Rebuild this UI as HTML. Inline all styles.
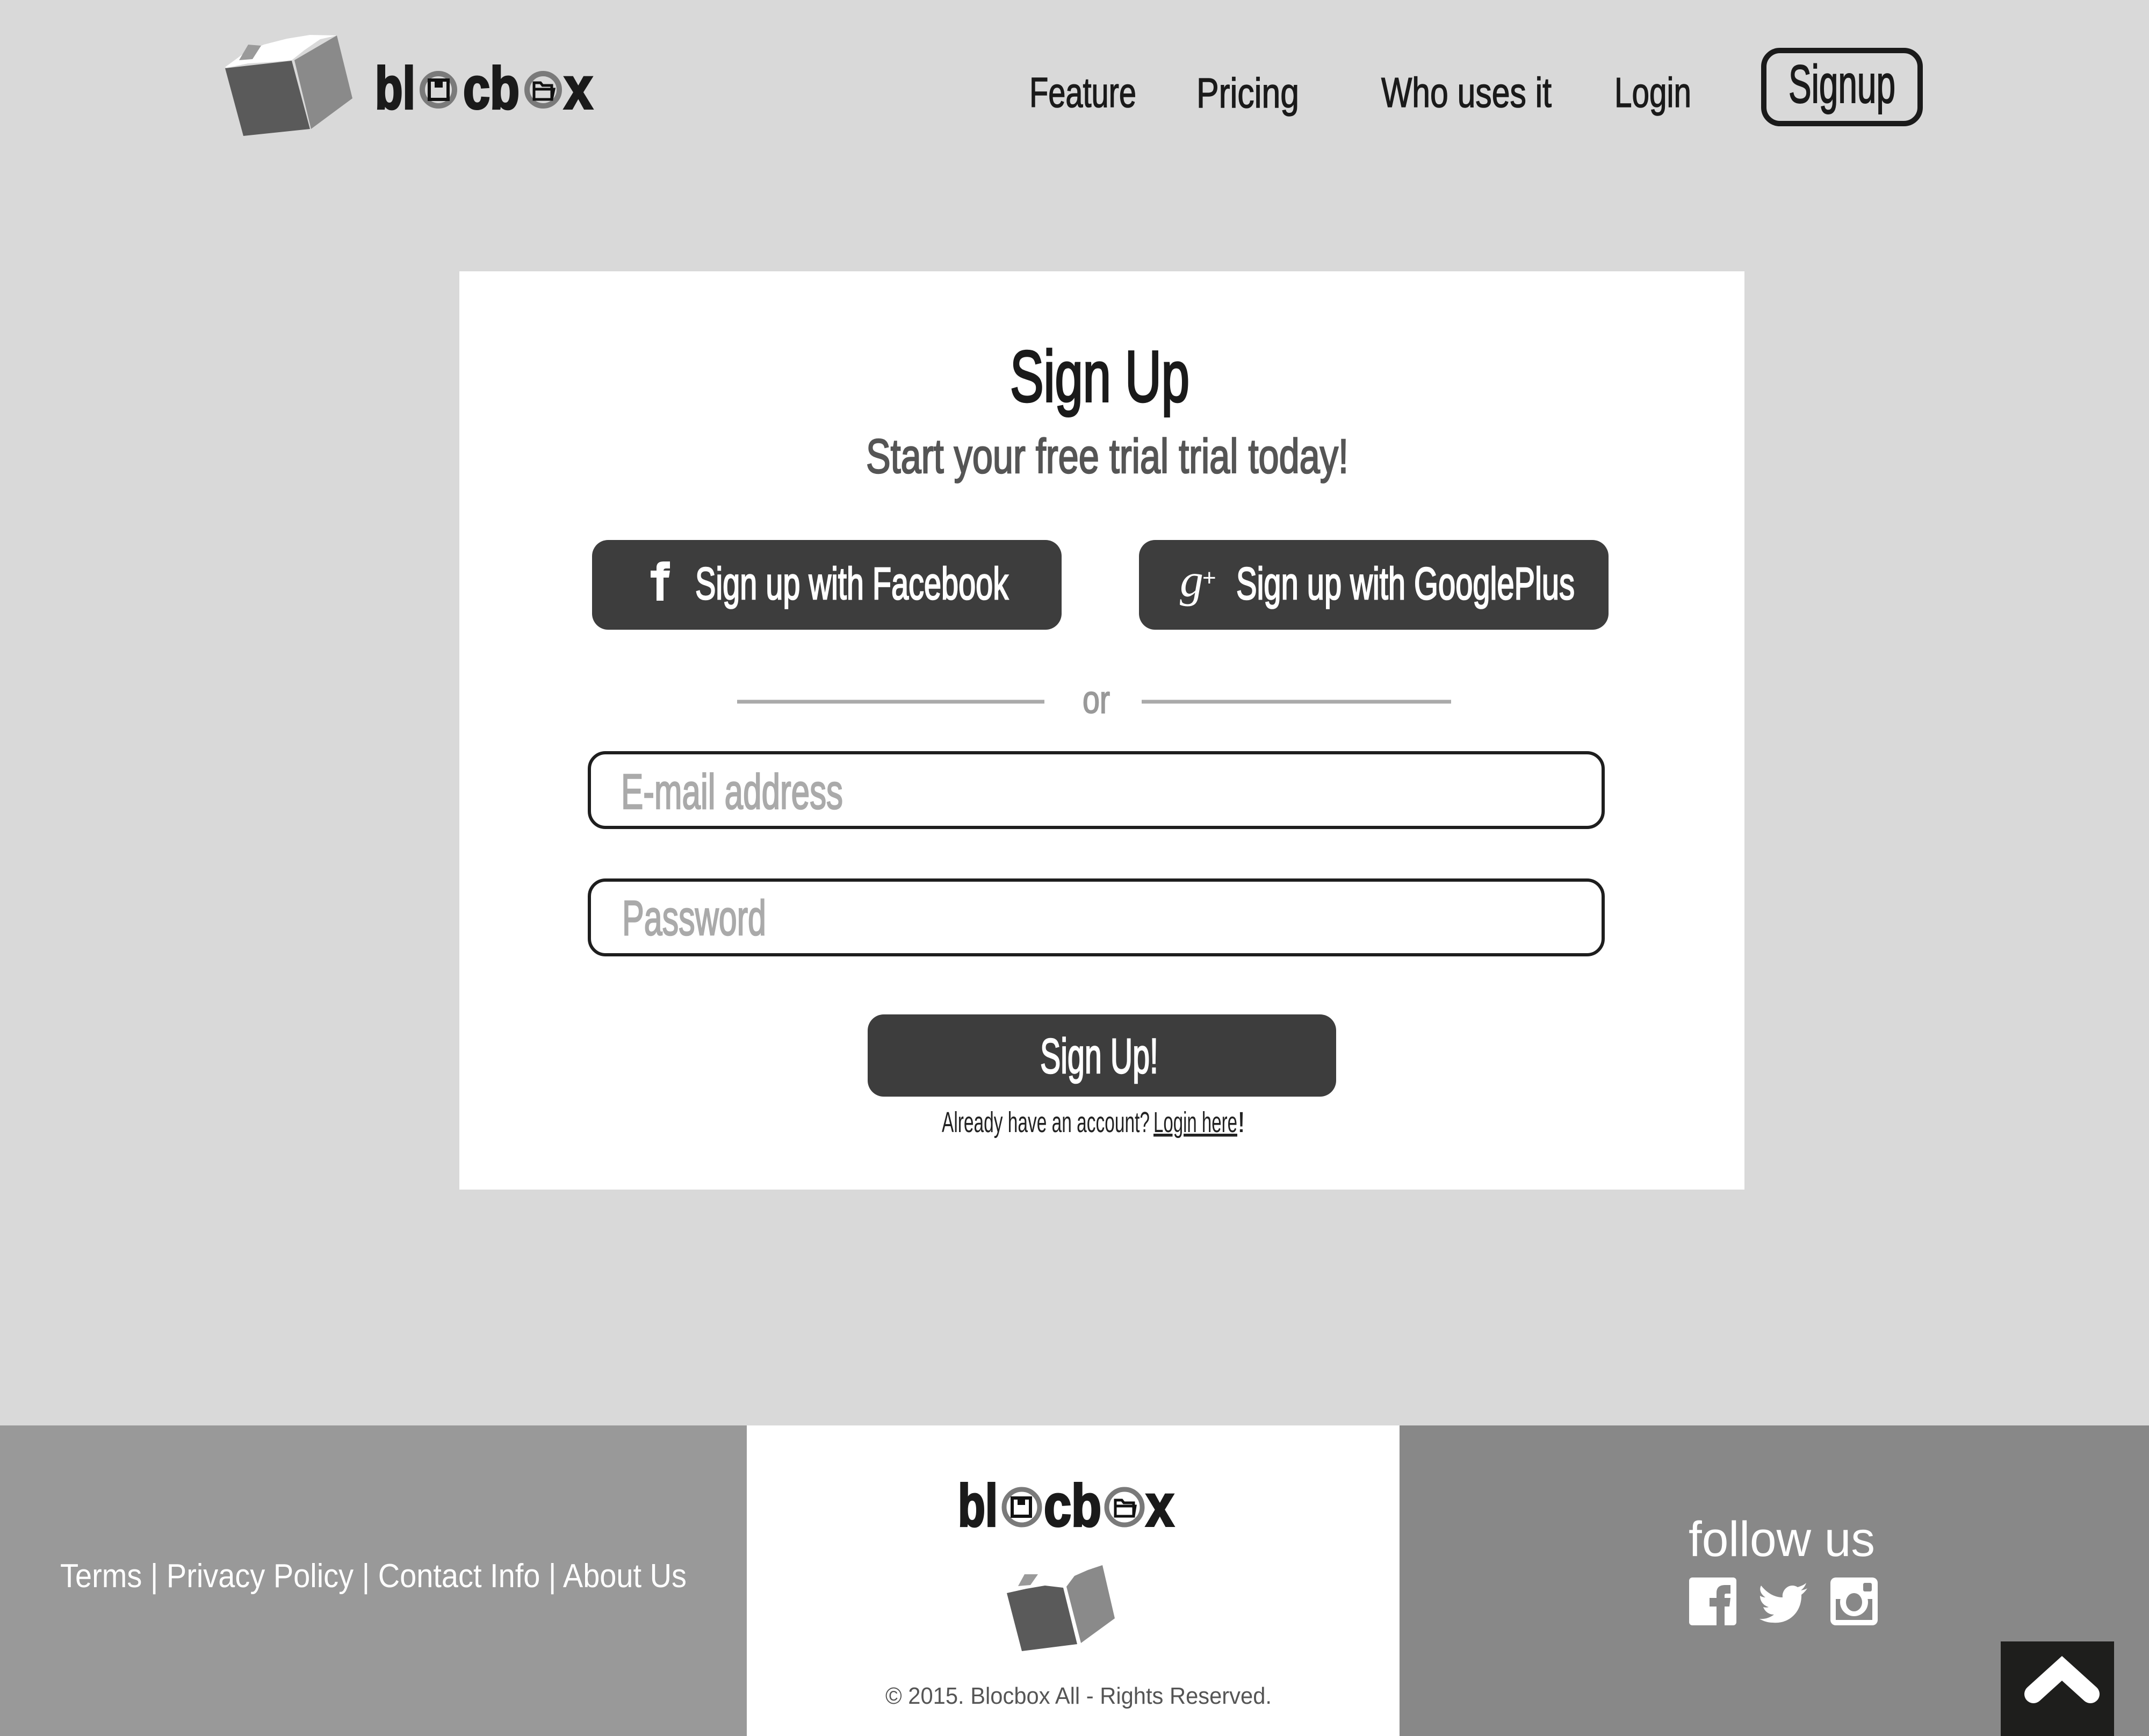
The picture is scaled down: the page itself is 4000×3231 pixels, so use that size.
<!DOCTYPE html>
<html><head><meta charset="utf-8"><style>
html,body{margin:0;padding:0;background:#d9d9d9}
svg{display:block}
.n{font-family:"Liberation Sans Narrow","Liberation Sans",sans-serif}
.s{font-family:"Liberation Sans",sans-serif}
</style></head><body>
<svg width="4000" height="3231" viewBox="0 0 4000 3231" xmlns="http://www.w3.org/2000/svg">
<rect width="4000" height="3231" fill="#d9d9d9"/>

<!-- header logo -->
<polygon points="422,126 462,118 510,115 543,112 567,93 596,73 627,66 577,65 534,72 491,83 453,100 419,125" fill="#fff"/>
<polygon points="445,112 462,83 486,85 470,110" fill="#9a9a9a"/>
<polygon points="419,127 543,113 577,240 453,253" fill="#5a5a5a"/>
<polygon points="548,112 627,66 656,183 579,240" fill="#8a8a8a"/>
<g class="s" font-weight="bold" font-size="110" fill="#1a1a1a" stroke="#1a1a1a" stroke-width="4">
<text x="698" y="202" textLength="75" lengthAdjust="spacingAndGlyphs">bl</text>
<text x="862" y="202" textLength="105" lengthAdjust="spacingAndGlyphs">cb</text>
<text x="1050" y="202" textLength="53" lengthAdjust="spacingAndGlyphs">x</text>
</g>
<circle cx="816" cy="167" r="30" fill="none" stroke="#7a7a7a" stroke-width="10"/>
<rect x="799" y="149" width="35" height="36" fill="none" stroke="#111" stroke-width="6"/>
<rect x="809" y="149" width="15" height="14" fill="#111"/>
<circle cx="1011" cy="167" r="30" fill="none" stroke="#7a7a7a" stroke-width="10"/>
<path d="M994 185 V154 H1006 L1010 159 H1027 V185 Z M994 166 H1031 L1027 185" fill="none" stroke="#111" stroke-width="5"/>

<!-- nav -->
<g class="n" font-size="78" fill="#1a1a1a" stroke="#1a1a1a" stroke-width="1.5">
<text x="1916" y="199" textLength="199" lengthAdjust="spacingAndGlyphs">Feature</text>
<text x="2227" y="200" textLength="191" lengthAdjust="spacingAndGlyphs">Pricing</text>
<text x="2571" y="199" textLength="317" lengthAdjust="spacingAndGlyphs">Who uses it</text>
<text x="3005" y="199" textLength="143" lengthAdjust="spacingAndGlyphs">Login</text>
</g>
<rect x="3283" y="94" width="291" height="136" rx="30" fill="none" stroke="#1a1a1a" stroke-width="10"/>
<text class="n" x="3329" y="191" font-size="100" fill="#1a1a1a" stroke="#1a1a1a" stroke-width="2" textLength="199" lengthAdjust="spacingAndGlyphs">Signup</text>

<!-- card -->
<rect x="855" y="505" width="2392" height="1709" fill="#fff"/>
<text class="n" x="1880" y="747" font-size="135" fill="#1a1a1a" stroke="#1a1a1a" stroke-width="4" textLength="334" lengthAdjust="spacingAndGlyphs">Sign Up</text>
<text class="n" x="1612" y="880" font-size="90" fill="#555" stroke="#555" stroke-width="2.5" textLength="898" lengthAdjust="spacingAndGlyphs">Start your free trial trial today!</text>

<rect x="1102" y="1005" width="874" height="167" rx="30" fill="#3d3d3d"/>
<path d="M1222 1118 V1075 H1211 V1062 H1222 V1057 C1222 1047 1228 1045 1236 1045 H1247 V1058 H1240 C1236 1058 1235 1060 1235 1063 V1062 H1247 L1245 1075 H1235 V1118 Z" fill="#fff"/>
<text class="n" x="1294" y="1115" font-size="84" fill="#fff" stroke="#fff" stroke-width="2.5" textLength="583" lengthAdjust="spacingAndGlyphs">Sign up with Facebook</text>

<rect x="2120" y="1005" width="874" height="167" rx="30" fill="#3d3d3d"/>
<text x="2196" y="1110" font-family="Liberation Serif,serif" font-style="italic" font-size="88" fill="#fff">g</text>
<text x="2238" y="1090" font-family="Liberation Sans,sans-serif" font-size="44" fill="#fff">+</text>
<text class="n" x="2301" y="1115" font-size="84" fill="#fff" stroke="#fff" stroke-width="2.5" textLength="630" lengthAdjust="spacingAndGlyphs">Sign up with GooglePlus</text>

<line x1="1372" y1="1306" x2="1944" y2="1306" stroke="#aaa" stroke-width="7"/>
<line x1="2125" y1="1306" x2="2701" y2="1306" stroke="#aaa" stroke-width="7"/>
<text class="n" x="2015" y="1327" font-size="72" fill="#999" stroke="#999" stroke-width="2" textLength="51" lengthAdjust="spacingAndGlyphs">or</text>

<rect x="1097" y="1401" width="1887" height="139" rx="30" fill="#fff" stroke="#1e1e1e" stroke-width="6"/>
<text class="n" x="1156" y="1505" font-size="92" fill="#aaa" stroke="#aaa" stroke-width="2.5" textLength="413" lengthAdjust="spacingAndGlyphs">E-mail address</text>
<rect x="1097" y="1638" width="1887" height="139" rx="30" fill="#fff" stroke="#1e1e1e" stroke-width="6"/>
<text class="n" x="1158" y="1740" font-size="92" fill="#aaa" stroke="#aaa" stroke-width="2.5" textLength="268" lengthAdjust="spacingAndGlyphs">Password</text>

<rect x="1615" y="1888" width="872" height="153" rx="30" fill="#3d3d3d"/>
<text class="n" x="1936" y="1997" font-size="92" fill="#fff" stroke="#fff" stroke-width="2.5" textLength="220" lengthAdjust="spacingAndGlyphs">Sign Up!</text>
<text class="n" x="1753" y="2107" font-size="54" fill="#222" textLength="387" lengthAdjust="spacingAndGlyphs">Already have an account?</text>
<text class="n" x="2147" y="2107" font-size="54" fill="#222" text-decoration="underline" textLength="156" lengthAdjust="spacingAndGlyphs">Login here</text>
<text class="n" x="2303" y="2107" font-size="54" fill="#222">!</text>

<!-- footer -->
<rect x="0" y="2653" width="1390" height="578" fill="#999"/>
<rect x="1390" y="2653" width="1215" height="578" fill="#fff"/>
<rect x="2605" y="2653" width="1395" height="578" fill="#888"/>
<text class="s" x="112" y="2954" font-size="62" fill="#fff" textLength="1166" lengthAdjust="spacingAndGlyphs">Terms | Privacy Policy | Contact Info | About Us</text>

<g class="s" font-weight="bold" font-size="110" fill="#1a1a1a" stroke="#1a1a1a" stroke-width="4">
<text x="1783" y="2840" textLength="74" lengthAdjust="spacingAndGlyphs">bl</text>
<text x="1943" y="2840" textLength="107" lengthAdjust="spacingAndGlyphs">cb</text>
<text x="2133" y="2840" textLength="52" lengthAdjust="spacingAndGlyphs">x</text>
</g>
<circle cx="1902" cy="2805" r="33" fill="none" stroke="#7a7a7a" stroke-width="9"/>
<rect x="1884" y="2788" width="34" height="34" fill="none" stroke="#111" stroke-width="6"/>
<rect x="1894" y="2788" width="14" height="13" fill="#111"/>
<circle cx="2093" cy="2805" r="33" fill="none" stroke="#7a7a7a" stroke-width="9"/>
<path d="M2076 2822 V2792 H2088 L2092 2797 H2110 V2822 Z M2076 2803 H2113 L2110 2822" fill="none" stroke="#111" stroke-width="5"/>
<polygon points="1895,2952 1907,2930 1932,2930 1918,2950" fill="#9a9a9a"/>
<polygon points="1874,2965 1910,2957 1945,2951 1979,2955 2005,3060 1902,3073" fill="#5a5a5a"/>
<polygon points="1985,2953 2000,2933 2025,2922 2052,2913 2075,3012 2012,3058" fill="#8a8a8a"/>
<text class="s" x="1648" y="3171" font-size="44" fill="#555" textLength="719" lengthAdjust="spacingAndGlyphs">© 2015. Blocbox All - Rights Reserved.</text>

<text class="s" x="3143" y="2896" font-size="92" fill="#fff" textLength="347" lengthAdjust="spacingAndGlyphs">follow us</text>
<rect x="3144" y="2936" width="88" height="89" rx="6" fill="#fff"/>
<path d="M3195 3025 V2990 H3182 V2974 H3195 V2965 C3195 2953 3202 2950 3212 2950 H3221 V2966 H3213 C3210 2966 3210 2968 3210 2971 V2974 H3221 L3219 2990 H3210 V3025 Z" fill="#888"/>
<path d="M3278 2951 C3290 2966 3304 2973 3318 2973 C3316 2958 3332 2945 3346 2954 C3352 2952 3358 2950 3362 2946 C3360 2952 3357 2956 3352 2960 C3357 2959 3361 2958 3364 2956 C3361 2961 3357 2965 3353 2968 C3354 3000 3330 3023 3300 3020 C3290 3020 3282 3017 3275 3013 C3285 3014 3294 3011 3302 3005 C3292 3005 3285 2999 3282 2991 C3286 2992 3289 2992 3292 2991 C3282 2988 3276 2980 3276 2970 C3279 2972 3283 2973 3286 2973 C3277 2967 3274 2958 3278 2951 Z" fill="#fff"/>
<rect x="3407" y="2936" width="88" height="89" rx="10" fill="#fff"/>
<rect x="3417" y="2966" width="68" height="49" fill="#888"/>
<rect x="3407" y="2966" width="88" height="10" fill="#fff"/>
<circle cx="3451" cy="2982" r="26" fill="#fff"/>
<ellipse cx="3451" cy="2982" rx="15" ry="17" fill="#888"/>
<rect x="3468" y="2946" width="16" height="16" rx="3" fill="#888"/>

<rect x="3724" y="3055" width="211" height="176" fill="#1e1e1c"/>
<polyline points="3785,3153 3838,3105 3891,3153" fill="none" stroke="#fff" stroke-width="34" stroke-linecap="round" stroke-linejoin="miter"/>
</svg>
</body></html>
